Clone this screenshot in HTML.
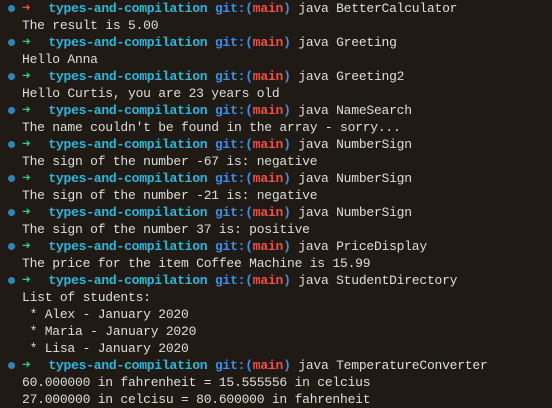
<!DOCTYPE html><html><head><style>
body{margin:0;width:552px;height:408px;background:#1f1a13;overflow:hidden;font-family:"Liberation Mono",monospace;font-size:13px;letter-spacing:-0.23px;color:#dedede}
.l{position:relative;height:17px;line-height:17px;padding-left:22px;white-space:pre}
.d{position:absolute;left:8px;top:5px;width:7px;height:7px;border-radius:50%;background:#2e86b8}
.c{color:#29b8db;font-weight:bold;margin-left:3px}.b{color:#3b8eea;font-weight:bold}.r{color:#f14c4c;font-weight:bold}.g{color:#23d18b;font-weight:bold}
.a{font-size:14px}
</style></head><body>
<div class="l"><i class="d"></i><span class="r a">➜</span>  <span class="c">types-and-compilation</span> <span class="b">git:(</span><span class="r">main</span><span class="b">)</span> java BetterCalculator</div>
<div class="l">The result is 5.00</div>
<div class="l"><i class="d"></i><span class="g a">➜</span>  <span class="c">types-and-compilation</span> <span class="b">git:(</span><span class="r">main</span><span class="b">)</span> java Greeting</div>
<div class="l">Hello Anna</div>
<div class="l"><i class="d"></i><span class="g a">➜</span>  <span class="c">types-and-compilation</span> <span class="b">git:(</span><span class="r">main</span><span class="b">)</span> java Greeting2</div>
<div class="l">Hello Curtis, you are 23 years old</div>
<div class="l"><i class="d"></i><span class="g a">➜</span>  <span class="c">types-and-compilation</span> <span class="b">git:(</span><span class="r">main</span><span class="b">)</span> java NameSearch</div>
<div class="l">The name couldn't be found in the array - sorry...</div>
<div class="l"><i class="d"></i><span class="g a">➜</span>  <span class="c">types-and-compilation</span> <span class="b">git:(</span><span class="r">main</span><span class="b">)</span> java NumberSign</div>
<div class="l">The sign of the number -67 is: negative</div>
<div class="l"><i class="d"></i><span class="g a">➜</span>  <span class="c">types-and-compilation</span> <span class="b">git:(</span><span class="r">main</span><span class="b">)</span> java NumberSign</div>
<div class="l">The sign of the number -21 is: negative</div>
<div class="l"><i class="d"></i><span class="g a">➜</span>  <span class="c">types-and-compilation</span> <span class="b">git:(</span><span class="r">main</span><span class="b">)</span> java NumberSign</div>
<div class="l">The sign of the number 37 is: positive</div>
<div class="l"><i class="d"></i><span class="g a">➜</span>  <span class="c">types-and-compilation</span> <span class="b">git:(</span><span class="r">main</span><span class="b">)</span> java PriceDisplay</div>
<div class="l">The price for the item Coffee Machine is 15.99</div>
<div class="l"><i class="d"></i><span class="g a">➜</span>  <span class="c">types-and-compilation</span> <span class="b">git:(</span><span class="r">main</span><span class="b">)</span> java StudentDirectory</div>
<div class="l">List of students:</div>
<div class="l"> * Alex - January 2020</div>
<div class="l"> * Maria - January 2020</div>
<div class="l"> * Lisa - January 2020</div>
<div class="l"><i class="d"></i><span class="g a">➜</span>  <span class="c">types-and-compilation</span> <span class="b">git:(</span><span class="r">main</span><span class="b">)</span> java TemperatureConverter</div>
<div class="l">60.000000 in fahrenheit = 15.555556 in celcius</div>
<div class="l">27.000000 in celcisu = 80.600000 in fahrenheit</div>
</body></html>
